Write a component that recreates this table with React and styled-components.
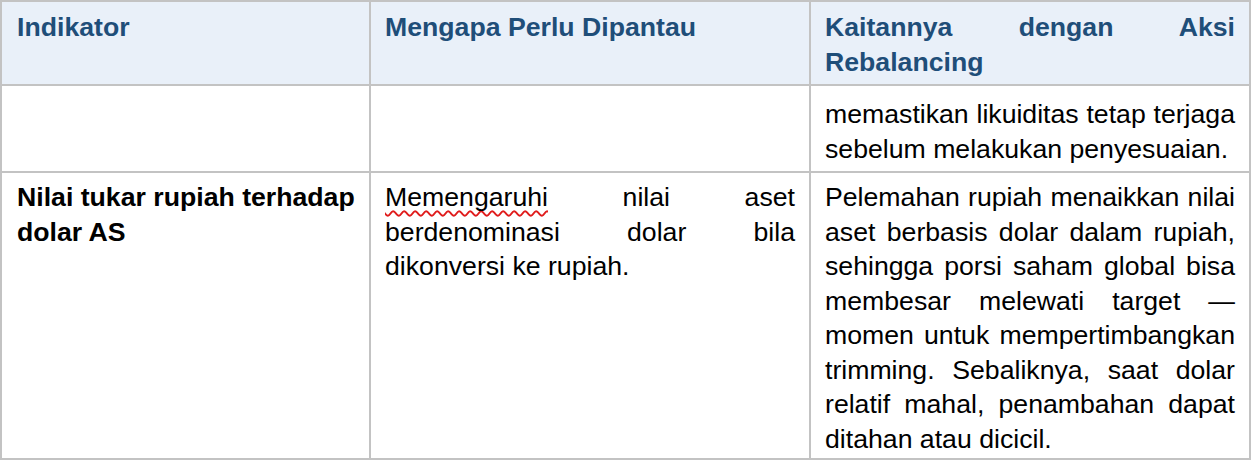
import React from 'react'
import styled, { createGlobalStyle } from 'styled-components'

const GlobalStyle = createGlobalStyle`
  html, body {
    margin: 0;
    padding: 0;
    background: #ffffff;
  }
  body {
    font-family: 'Liberation Sans', Arial, sans-serif;
  }
`

const Table = styled.table`
  border-collapse: separate;
  border-spacing: 0;
  table-layout: fixed;
  width: 1251px;
  border-top: 2px solid #c3c3c3;
  border-left: 2px solid #c3c3c3;
  font-family: 'Liberation Sans', Arial, sans-serif;
  font-size: 26.67px;
  line-height: 34.5px;
  color: #000000;
`

const Col = styled.col`
  width: ${p => p.width}px;
`

const Cell = styled.td`
  box-sizing: border-box;
  vertical-align: top;
  border-right: 2px solid #c3c3c3;
  border-bottom: 2px solid #c3c3c3;
  padding: ${p => p.$pt || 0}px 14px ${p => p.$pb || 0}px ${p => p.$pl || 14}px;
  text-align: ${p => (p.$justify ? 'justify' : 'left')};
  font-weight: ${p => (p.$bold ? 700 : 400)};
`

const HeadCell = styled(Cell).attrs({ as: 'th' })`
  background: #e9f0f9;
  color: #1f4e79;
  font-weight: 700;
`

const Misspelled = styled.span`
  text-decoration: underline wavy #e01b1b;
  text-decoration-thickness: 1.5px;
  text-underline-offset: 4px;
  text-decoration-skip-ink: none;
`

const rows = [
  {
    pt: 11,
    pb: 5,
    cells: [
      '',
      '',
      'memastikan likuiditas tetap terjaga sebelum melakukan penyesuaian.',
    ],
  },
  {
    pt: 7,
    pb: 2,
    cells: [
      'Nilai tukar rupiah terhadap dolar AS',
      <><Misspelled>Memengaruhi</Misspelled> nilai aset berdenominasi dolar bila dikonversi ke rupiah.</>,
      'Pelemahan rupiah menaikkan nilai aset berbasis dolar dalam rupiah, sehingga porsi saham global bisa membesar melewati target — momen untuk mempertimbangkan trimming. Sebaliknya, saat dolar relatif mahal, penambahan dapat ditahan atau dicicil.',
    ],
  },
]

export default function App() {
  return (
    <>
      <GlobalStyle />
      <Table>
        <colgroup>
          <Col width={369} />
          <Col width={440} />
          <Col width={440} />
        </colgroup>
        <thead>
          <tr>
            <HeadCell $pt={8} $pb={5} $pl={15}>Indikator</HeadCell>
            <HeadCell $pt={8} $pb={5}>Mengapa Perlu Dipantau</HeadCell>
            <HeadCell $pt={8} $pb={5} $justify>Kaitannya dengan Aksi Rebalancing</HeadCell>
          </tr>
        </thead>
        <tbody>
          {rows.map((row, i) => (
            <tr key={i}>
              <Cell $pt={row.pt} $pb={row.pb} $pl={15} $bold>{row.cells[0]}</Cell>
              <Cell $pt={row.pt} $pb={row.pb} $justify>{row.cells[1]}</Cell>
              <Cell $pt={row.pt} $pb={row.pb} $justify>{row.cells[2]}</Cell>
            </tr>
          ))}
        </tbody>
      </Table>
    </>
  )
}
